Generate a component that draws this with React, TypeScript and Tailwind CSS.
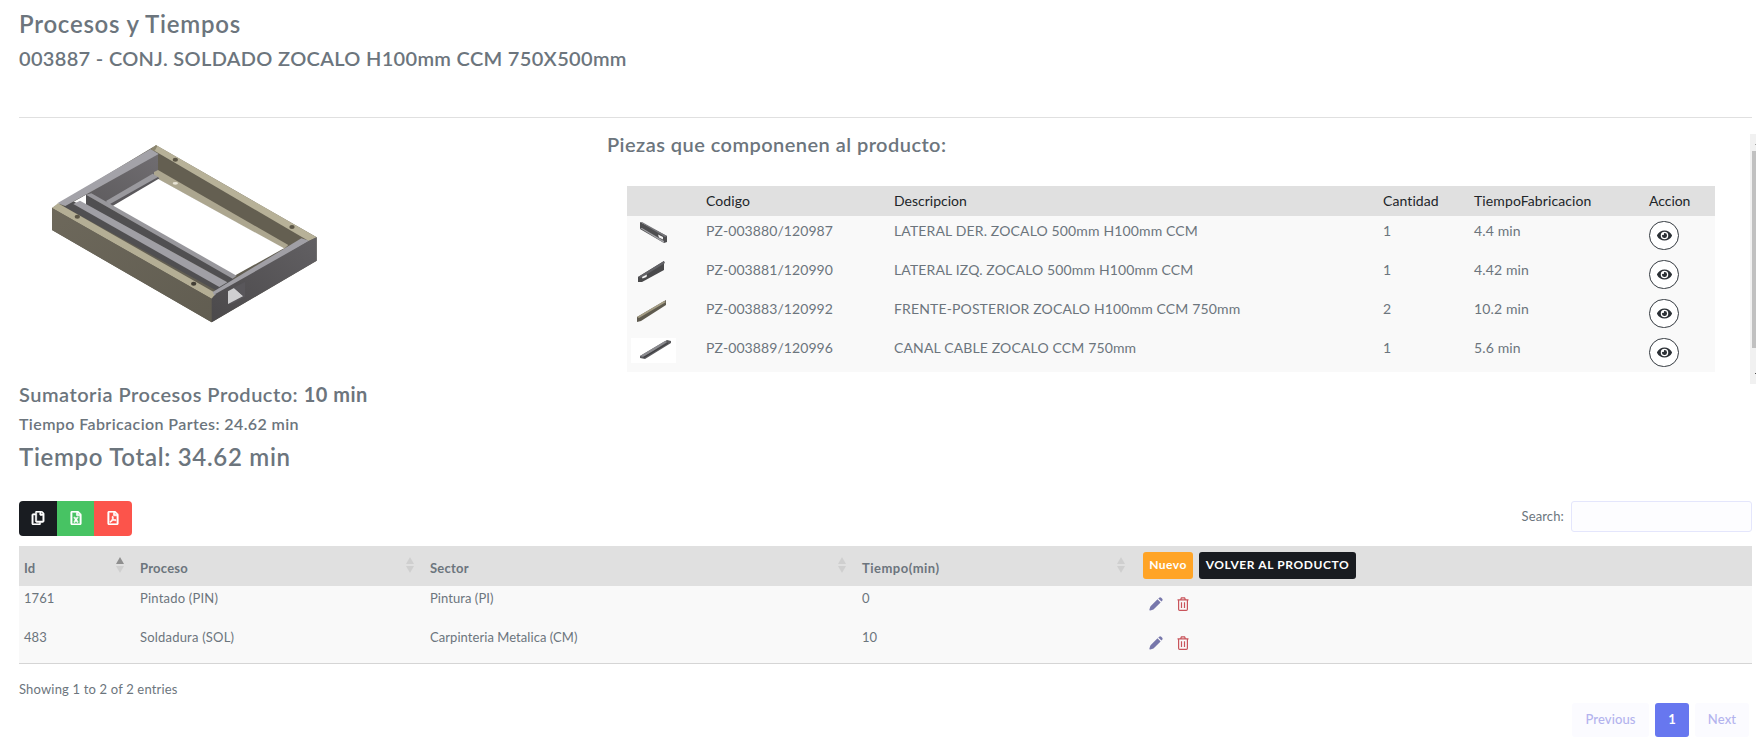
import React from 'react';
import { FaEye, FaRegCopy, FaRegFileExcel, FaRegFilePdf } from 'react-icons/fa';

function ProductDrawing() {
  return (
    <svg width="310" height="200" viewBox="0 0 930 600" className="block">
      <defs>
        <linearGradient id="front" x1="0" y1="0" x2="1" y2="1">
          <stop offset="0" stopColor="#6d685b" />
          <stop offset="1" stopColor="#615d51" />
        </linearGradient>
        <linearGradient id="side" x1="0" y1="1" x2="1" y2="0">
          <stop offset="0" stopColor="#4b494b" />
          <stop offset="1" stopColor="#626063" />
        </linearGradient>
        <linearGradient id="inner" x1="0" y1="1" x2="1" y2="0">
          <stop offset="0" stopColor="#5c5a5c" />
          <stop offset="1" stopColor="#706d71" />
        </linearGradient>
      </defs>
      <polygon points="66,234 378,46 860,322 860,392 545,577 66,300" fill="#625e52" />
      <polygon points="130,215 384,70 384,138 235,225 190,195" fill="url(#inner)" />
      <polygon points="384,72 824,322 765,356 384,138" fill="#645f51" />
      <polygon points="372,126 384,120 775,345 762,357 372,140" fill="#aca68f" />
      <polygon points="228,213 368,131 388,143 240,229" fill="#9a999e" />
      <polygon points="240,222 384,141 388,147 245,231" fill="#5a585c" />
      <polygon points="385,147 762,355 612,438 244,230" fill="#fff" />
      <polygon points="112,226 168,194 168,224 134,230" fill="#fff" />
      <polygon points="100,229 130,214 600,460 560,482" fill="#504f51" />
      <polygon points="168,194 612,446 600,460 168,224" fill="#504f51" />
      <polygon points="168,194 184,190 620,437 608,446" fill="#98979c" />
      <polygon points="130,222 150,212 592,457 568,471" fill="#a09fa5" />
      <polygon points="106,228 82,220 362,57 386,72" fill="#a3a2a8" />
      <polygon points="364,57 378,45 860,322 836,333" fill="#b7b198" />
      <polygon points="362,58 378,46 382,48 374,63" fill="#8c866f" />
      <polygon points="66,234 84,220 558,490 545,506" fill="#b4ae95" />
      <polygon points="548,486 814,325 838,332 556,502" fill="#a09fa5" />
      <polygon points="66,234 545,506 545,577 66,300" fill="url(#front)" />
      <polygon points="545,506 560,490 836,333 860,322 860,392 545,577" fill="url(#side)" />
      <polygon points="594,482 645,455 645,500 610,520 594,522" fill="#58565a" />
      <polygon points="594,484 612,474 640,498 594,522" fill="#cfcfd1" />
      <polygon points="612,474 645,457 645,497 638,497" fill="#59575b" />
      <ellipse cx="436" cy="89" rx="8" ry="6" fill="#5b5546" />
      <ellipse cx="786" cy="291" rx="8" ry="6" fill="#5b5546" />
      <ellipse cx="142" cy="260" rx="8" ry="6" fill="#5b5546" />
      <ellipse cx="491" cy="461" rx="8" ry="6" fill="#423e35" />
      <ellipse cx="436" cy="160" rx="8" ry="4" fill="#e8e4d6" />
    </svg>
  );
}

function RightSideThumb() {
  return (
    <svg width="45" height="25" viewBox="0 0 45 25">
      <polygon points="9,1 36,15 36,21 33,22 9,8" fill="#4e4e50" />
      <polygon points="9,7 11,7 33,20 33,22" fill="#a0a0a4" />
      <polygon points="9,1 11,1 36,15 34,16" fill="#77777b" />
      <polygon points="27,13.500 32,16 32,18.500 28,16.500" fill="#f6f6f6" />
    </svg>
  );
}

function LeftSideThumb() {
  return (
    <svg width="45" height="25" viewBox="0 0 45 25">
      <polygon points="7,17 33,1 33,10 11,22 7,22" fill="#4a4a4c" />
      <polygon points="7,17 33,1 34,3 10,18" fill="#626266" />
      <polygon points="11,17 16,14.500 15.500,17 11.500,18.500" fill="#f6f6f6" />
    </svg>
  );
}

function FrontThumb() {
  return (
    <svg width="45" height="25" viewBox="0 0 45 25">
      <polygon points="6,18 35,1 35,6 10,22 6,23" fill="#5f5b4f" />
      <polygon points="6,18 33,2 35,3 8,19" fill="#a49d85" />
    </svg>
  );
}

function ChannelThumb() {
  return (
    <svg width="45" height="25" viewBox="0 0 45 25" className="bg-white">
      <polygon points="9,18 36,2 40,3 40,5 14,21 9,20" fill="#5b5b5e" />
      <polygon points="9,18 34,3 36,4 13,19" fill="#8b8b8f" />
      <polygon points="12,19 37,4.500 37,5.500 13,20" fill="#3f3f42" />
    </svg>
  );
}

function PencilIcon() {
  return (
    <svg width="14" height="14" viewBox="0 0 14 14" fill="#7777ab">
      <path d="M8.500 2.300L11.600 5.400L5 12Q4.500 12.500 3.800 12.700L1.300 13.500Q0.200 13.700 0.400 12.600L1.200 9.900Q1.400 9.300 1.800 8.900Z" />
      <path d="M9.300 1.500L10.200 0.700Q11.200-0.100 12.200 0.800L13.200 1.800Q14 2.800 13.200 3.800L12.400 4.600Z" />
    </svg>
  );
}

function TrashIcon() {
  return (
    <svg width="12" height="14" viewBox="0 0 12 14" fill="none" stroke="#c9545b" strokeWidth="1.2">
      <path d="M0.500 2.900H11.500M3.600 2.800L4.400 0.900H7.600L8.400 2.800M1.600 3V12.200Q1.600 13.300 2.700 13.300H9.300Q10.400 13.300 10.400 12.200V3M4.500 5.200V11M7.500 5.200V11" />
    </svg>
  );
}

function SortArrows({ ascending = false }: { ascending?: boolean }) {
  return (
    <svg width="8" height="16" viewBox="0 0 8 16" className="mt-[2px] mr-[16px] shrink-0">
      <polygon points="4,0 8,7 0,7" fill={ascending ? '#8f8f8f' : '#cfcfcf'} />
      <polygon points="0,9 8,9 4,16" fill="#cfcfcf" />
    </svg>
  );
}

const parts = [
  { image: <RightSideThumb />, code: 'PZ-003880/120987', description: 'LATERAL DER. ZOCALO 500mm H100mm CCM', quantity: '1', time: '4.4 min' },
  { image: <LeftSideThumb />, code: 'PZ-003881/120990', description: 'LATERAL IZQ. ZOCALO 500mm H100mm CCM', quantity: '1', time: '4.42 min' },
  { image: <FrontThumb />, code: 'PZ-003883/120992', description: 'FRENTE-POSTERIOR ZOCALO H100mm CCM 750mm', quantity: '2', time: '10.2 min' },
  { image: <ChannelThumb />, code: 'PZ-003889/120996', description: 'CANAL CABLE ZOCALO CCM 750mm', quantity: '1', time: '5.6 min' },
];

const processes = [
  { id: '1761', process: 'Pintado (PIN)', sector: 'Pintura (PI)', time: '0' },
  { id: '483', process: 'Soldadura (SOL)', sector: 'Carpinteria Metalica (CM)', time: '10' },
];

function PartsTable() {
  return (
    <div className="mt-[30px] ml-[24px] w-[1088px] text-[14px] leading-[21px]">
      <div className="grid h-[30px] grid-cols-[79px_188px_489px_91px_175px_66px] items-center bg-[#e0e0e0] pb-[2px] text-[#212529]">
        <span />
        <span className="tracking-[0.09px]">Codigo</span>
        <span>Descripcion</span>
        <span className="tracking-[0.09px]">Cantidad</span>
        <span className="tracking-[0.11px]">TiempoFabricacion</span>
        <span className="tracking-[-0.05px]">Accion</span>
      </div>
      {parts.map((part) => (
        <div key={part.code} className="grid h-[39px] grid-cols-[79px_188px_489px_91px_175px_66px] items-start bg-[#f9f9f9] pt-[4px] tracking-[0.14px]">
          <span className="pt-px pl-[4px]">{part.image}</span>
          <span className="tracking-[0.08px]">{part.code}</span>
          <span>{part.description}</span>
          <span>{part.quantity}</span>
          <span>{part.time}</span>
          <button className="mt-px flex h-[29px] w-[30px] items-center justify-center rounded-full border border-[#343a40] bg-white pb-px text-[#2b3035]">
            <FaEye size={15} />
          </button>
        </div>
      ))}
    </div>
  );
}

function ScrollBar() {
  return (
    <div className="flex h-[250px] w-[6px] shrink-0 flex-col items-end overflow-hidden bg-[#f1f1f1]">
      <div className="mt-[10px] h-px w-px bg-[#a3a3a3]" />
      <div className="mt-[6px] h-[197px] w-[4px] bg-[#c1c1c1]" />
      <div className="mt-[25px] h-px w-px bg-[#505050]" />
    </div>
  );
}

export default function App() {
  return (
    <main className="flex h-[745px] w-[1756px] flex-col overflow-hidden bg-white pl-[19px] font-['Lato',sans-serif] text-[#6c757d]">
      <h1 className="mt-[10px] text-[24px] leading-[28px] font-semibold tracking-[0.75px]">Procesos y Tiempos</h1>
      <h2 className="mt-[8px] text-[20px] leading-[24px] font-semibold tracking-[0.32px]">003887 - CONJ. SOLDADO ZOCALO H100mm CCM 750X500mm</h2>
      <div className="mt-[47px] mr-[4px] h-px shrink-0 bg-[#e0e0e0]" />

      <section className="flex h-[383px] shrink-0">
        <div className="w-[584px] shrink-0 font-semibold">
          <div className="pt-[12px] pl-[11px]">
            <ProductDrawing />
          </div>
          <p className="mt-[52px] text-[20px] leading-[24px] tracking-[0.5px]">
            Sumatoria Procesos Producto: <b className="font-bold">10 min</b>
          </p>
          <p className="mt-[8px] text-[16px] leading-[19px] tracking-[0.4px]">Tiempo Fabricacion Partes: 24.62 min</p>
          <p className="mt-[9px] text-[24px] leading-[29px] tracking-[0.7px]">Tiempo Total: 34.62 min</p>
        </div>
        <div className="flex grow justify-between pt-[14px]">
          <div>
            <h3 className="ml-[4px] text-[20px] leading-[24px] font-semibold tracking-[0.45px]">Piezas que componenen al producto:</h3>
            <PartsTable />
          </div>
          <div className="pt-[2px]">
            <ScrollBar />
          </div>
        </div>
      </section>

      <div className="mr-[4px] flex h-[45px] shrink-0 items-start justify-between">
        <div className="flex h-[35px] w-[113px] overflow-hidden rounded-[4px] text-white">
          <button className="flex w-[38px] items-center justify-center bg-[#191c21] pb-px"><FaRegCopy size={14} stroke="currentColor" strokeWidth={22} /></button>
          <button className="flex w-[37px] items-center justify-center bg-[#47c363] pb-px"><FaRegFileExcel size={14} stroke="currentColor" strokeWidth={22} /></button>
          <button className="flex w-[38px] items-center justify-center bg-[#fc544b] pb-px"><FaRegFilePdf size={14} stroke="currentColor" strokeWidth={22} /></button>
        </div>
        <label className="flex items-center text-[13px] tracking-[0.14px]">
          Search:
          <input className="ml-[7px] h-[31px] w-[181px] rounded-[3px] border border-[#e4e6fc] bg-[#fdfdff]" />
        </label>
      </div>

      <div className="mr-[4px] border-b border-[#d5d5d5] text-[13px] leading-[20px]">
        <div className="grid h-[40px] grid-cols-[116px_290px_432px_279px_1fr] items-center bg-[#e0e0e0] pl-[5px] font-bold">
          <div className="flex justify-between"><span className="pt-[3px]">Id</span><SortArrows ascending /></div>
          <div className="flex justify-between"><span className="pt-[3px] tracking-[0.24px]">Proceso</span><SortArrows /></div>
          <div className="flex justify-between"><span className="pt-[3px] tracking-[0.24px]">Sector</span><SortArrows /></div>
          <div className="flex justify-between"><span className="pt-[3px] tracking-[0.49px]">Tiempo(min)</span><SortArrows /></div>
          <div className="-mt-[2px] flex gap-[6px] pl-[2px] text-[12px] text-white">
            <button className="h-[27px] w-[50px] rounded-[3px] bg-[#ffa426] tracking-[0.46px]">Nuevo</button>
            <button className="h-[27px] w-[157px] rounded-[3px] bg-[#191c21] tracking-[0.6px]">VOLVER AL PRODUCTO</button>
          </div>
        </div>
        {processes.map((row) => (
          <div key={row.id} className="grid h-[38.5px] grid-cols-[116px_290px_432px_279px_1fr] items-start bg-[#f9f9f9] pt-[2px] pl-[5px] tracking-[0.06px]">
            <span>{row.id}</span>
            <span className="tracking-[0.2px]">{row.process}</span>
            <span>{row.sector}</span>
            <span>{row.time}</span>
            <div className="flex items-center gap-[14px] pt-[9px] pl-[8px]">
              <PencilIcon />
              <TrashIcon />
            </div>
          </div>
        ))}
      </div>

      <p className="mt-[15px] text-[13px] leading-[20px] tracking-[0.17px]">Showing 1 to 2 of 2 entries</p>
      <nav className="mt-[4px] mr-[7px] flex h-[34px] shrink-0 justify-end gap-[6px] text-[13px] tracking-[0.12px] text-[#b3b3ee]">
        <button className="w-[77px] rounded-[3px] bg-[#fbfbff] font-medium">Previous</button>
        <button className="w-[34px] rounded-[3px] bg-[#6777ef] font-bold text-white">1</button>
        <button className="w-[54px] rounded-[3px] bg-[#fbfbff] font-medium">Next</button>
      </nav>
    </main>
  );
}
